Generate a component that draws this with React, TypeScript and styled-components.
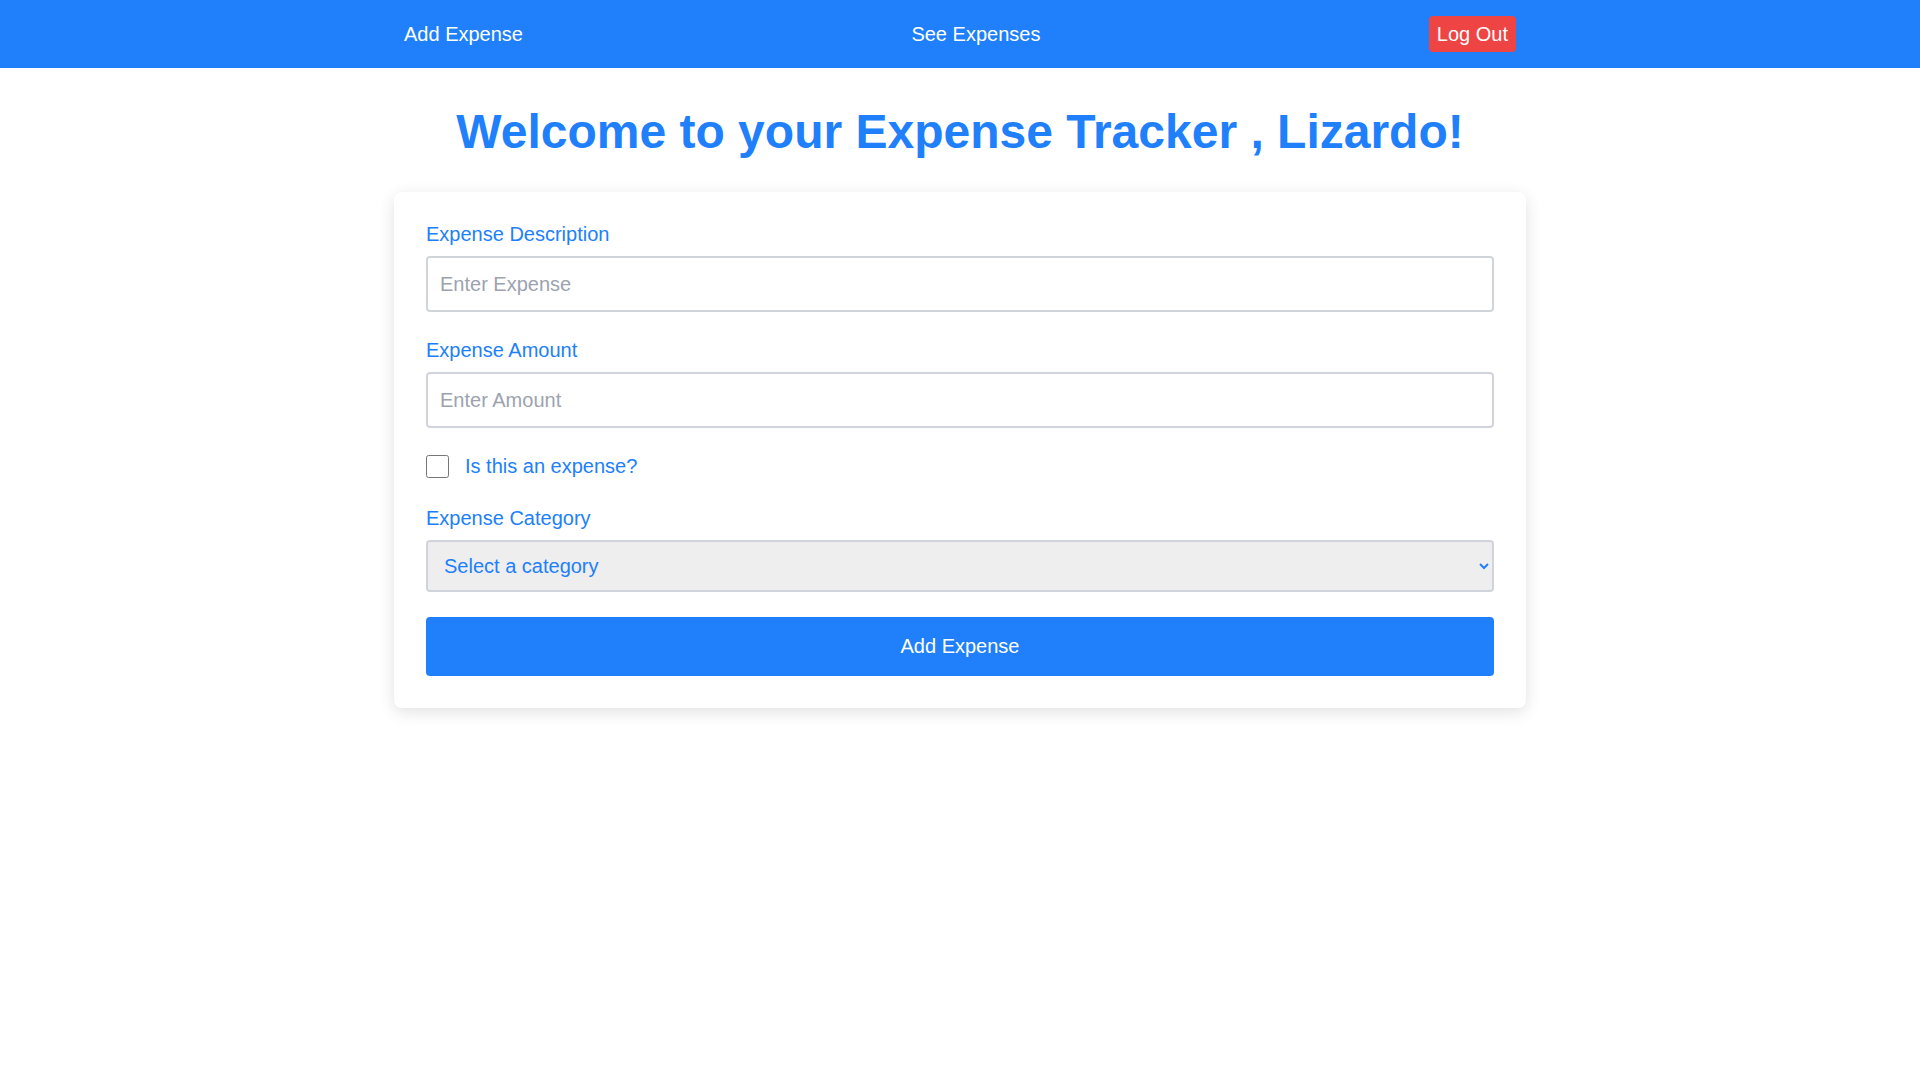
import React from "react";
import styled, { createGlobalStyle } from "styled-components";

const BLUE = "#2080fc";

const GlobalStyle = createGlobalStyle`
  html, body {
    margin: 0;
    padding: 0;
    background: #ffffff;
    font-family: "Liberation Sans", Arial, sans-serif;
  }
  * { box-sizing: border-box; }
`;

const NavBar = styled.nav`
  background: ${BLUE};
  height: 68px;
`;

const NavInner = styled.div`
  max-width: 1152px;
  height: 100%;
  margin: 0 auto;
  padding: 0 20px;
  display: flex;
  align-items: center;
  justify-content: space-between;
`;

const NavLink = styled.a`
  color: #ffffff;
  font-size: 20px;
  text-decoration: none;
  cursor: pointer;
`;

const LogOutButton = styled.button`
  background: #ef4444;
  color: #ffffff;
  border: none;
  border-radius: 4px;
  font-family: inherit;
  font-size: 20px;
  height: 36px;
  padding: 0 8px;
  cursor: pointer;
`;

const Main = styled.main`
  display: flex;
  flex-direction: column;
  align-items: center;
  padding: 0 20px 40px;
`;

const Title = styled.h1`
  color: ${BLUE};
  font-size: 48px;
  font-weight: 700;
  margin: 36px 0 33px;
  text-align: center;
`;

const Card = styled.form`
  width: 100%;
  max-width: 1132px;
  background: #ffffff;
  border-radius: 8px;
  box-shadow: 0 4px 16px rgba(0, 0, 0, 0.12);
  padding: 30px 32px 32px 32px;
  display: flex;
  flex-direction: column;
  gap: 26px;
`;

const Field = styled.div`
  display: flex;
  flex-direction: column;
`;

const Label = styled.label`
  color: ${BLUE};
  font-size: 20px;
  line-height: 24px;
  margin-bottom: 10px;
`;

const TextInput = styled.input`
  width: 100%;
  height: 56px;
  border: 2px solid #d1d5db;
  border-radius: 4px;
  padding: 0 12px;
  font-family: inherit;
  font-size: 20px;
  color: #111827;
  background: #ffffff;
  outline: none;
  &::placeholder {
    color: #9ca3af;
  }
`;

const CheckRow = styled.div`
  display: flex;
  align-items: center;
  gap: 16px;
  margin: 1px 0 2px;
`;

const CheckBox = styled.input`
  width: 23px;
  height: 23px;
  margin: 0;
`;

const CheckLabel = styled.label`
  color: ${BLUE};
  font-size: 20px;
`;

const Select = styled.select`
  width: 100%;
  height: 52px;
  border: 2px solid #d1d5db;
  border-radius: 4px;
  padding: 0 12px;
  background: #eeeeee;
  color: ${BLUE};
  font-family: inherit;
  font-size: 20px;
  outline: none;
`;

const SubmitButton = styled.button`
  width: 100%;
  height: 59px;
  margin-top: -1px;
  border: none;
  border-radius: 4px;
  background: ${BLUE};
  color: #ffffff;
  font-family: inherit;
  font-size: 20px;
  cursor: pointer;
`;

export default function App() {
  return (
    <>
      <GlobalStyle />
      <NavBar>
        <NavInner>
          <NavLink>Add Expense</NavLink>
          <NavLink>See Expenses</NavLink>
          <LogOutButton type="button">Log Out</LogOutButton>
        </NavInner>
      </NavBar>
      <Main>
        <Title>Welcome to your Expense Tracker , Lizardo!</Title>
        <Card onSubmit={(e) => e.preventDefault()}>
          <Field>
            <Label htmlFor="desc">Expense Description</Label>
            <TextInput id="desc" type="text" placeholder="Enter Expense" />
          </Field>
          <Field>
            <Label htmlFor="amount">Expense Amount</Label>
            <TextInput id="amount" type="text" placeholder="Enter Amount" />
          </Field>
          <CheckRow>
            <CheckBox id="isExpense" type="checkbox" />
            <CheckLabel htmlFor="isExpense">Is this an expense?</CheckLabel>
          </CheckRow>
          <Field>
            <Label htmlFor="category">Expense Category</Label>
            <Select id="category" defaultValue="">
              <option value="">Select a category</option>
              <option value="food">Food</option>
              <option value="transport">Transport</option>
              <option value="other">Other</option>
            </Select>
          </Field>
          <SubmitButton type="submit">Add Expense</SubmitButton>
        </Card>
      </Main>
    </>
  );
}
